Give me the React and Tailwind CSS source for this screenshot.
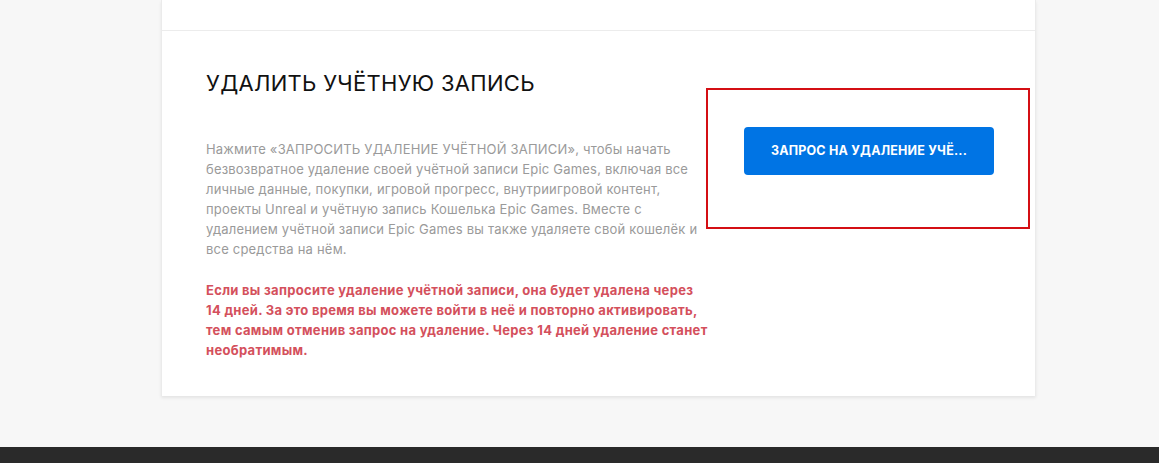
import React from 'react';

export default function App() {
  return (
    <div className="min-h-screen bg-[#f7f7f7] flex flex-col" style={{ fontFamily: 'Inter, "Noto Sans", sans-serif' }}>
      <div className="relative ml-[161px] w-[875px] bg-white border-x border-[#ebebeb] shadow-[0_2px_3px_rgba(0,0,0,0.08)]">
        {/* previous section tail */}
        <div className="h-[31px] border-b border-[#ececec]" />

        {/* delete account */}
        <div className="flex pl-[44px] pt-[38px] pb-[36px]">
          <div className="w-[508px]">
            <h2 className="text-[22px] leading-[28px] tracking-[0.3px] text-[#111] font-normal">
              УДАЛИТЬ УЧЁТНУЮ ЗАПИСЬ
            </h2>
            <p className="mt-[42px] text-[13px] leading-[20px] tracking-[0.2px] text-[#9a9a9a]">
              Нажмите «ЗАПРОСИТЬ УДАЛЕНИЕ УЧЁТНОЙ ЗАПИСИ», чтобы начать безвозвратное удаление своей учётной записи Epic Games, включая все личные данные, покупки, игровой прогресс, внутриигровой контент, проекты Unreal и учётную запись Кошелька Epic Games. Вместе с удалением учётной записи Epic Games вы также удаляете свой кошелёк и все средства на нём.
            </p>
            <p className="mt-[21px] text-[13px] leading-[20px] tracking-[0.3px] font-bold text-[#d4505c] whitespace-nowrap">
              Если вы запросите удаление учётной записи, она будет удалена через
              <br />
              14 дней. За это время вы можете войти в неё и повторно активировать,
              <br />
              тем самым отменив запрос на удаление. Через 14 дней удаление станет
              <br />
              необратимым.
            </p>
          </div>
          <div className="ml-[30px] pt-[58px]">
            <button className="w-[250px] h-[48px] rounded-[4px] bg-[#0074e4] text-white text-[12.5px] font-bold tracking-[0.2px] whitespace-nowrap">
              ЗАПРОС НА УДАЛЕНИЕ УЧЁ...
            </button>
          </div>
        </div>

        {/* annotation box */}
        <div className="absolute left-[544px] top-[88px] w-[324px] h-[141px] border-2 border-[#d40f14] pointer-events-none" />
      </div>
      <div className="h-[51px]" />
      <div className="flex-1 bg-[#2a2a2a] min-h-[16px]" />
    </div>
  );
}
